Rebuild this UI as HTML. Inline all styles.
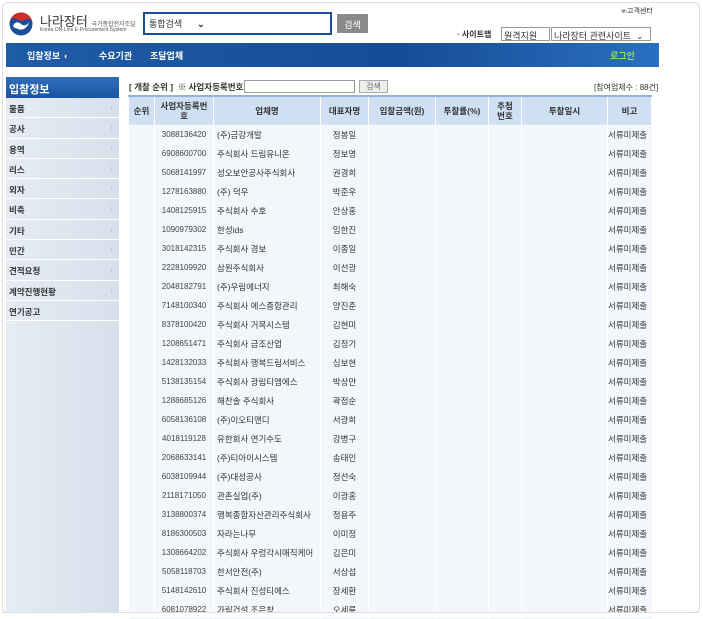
<!DOCTYPE html>
<html><head><meta charset="utf-8">
<style>
*{margin:0;padding:0;box-sizing:border-box}
body{width:703px;height:617px;background:#fff;font-family:"Liberation Sans","Noto Sans CJK KR",sans-serif;font-size:9px;color:#333;position:relative;overflow:hidden}
.frame{position:absolute;left:2px;top:2px;width:698px;height:611px;border:1px solid #ddd;border-radius:6px;background:#fff}
.abs{position:absolute}
.nav{left:6px;top:43px;width:653px;height:24px;background:linear-gradient(90deg,#1f5ca8,#164c95 60%,#2a6fc0);}
.nav span{position:absolute;top:6px;color:#fff;font-size:9px;font-weight:bold}
.side{left:6px;top:77px;width:113px;height:535px;background:linear-gradient(90deg,#e6ecf4,#d6e0ec)}
.sh{height:21px;background:linear-gradient(#2f6fbd,#1b549e);color:#fff;font-weight:bold;font-size:11px;padding:4px 0 0 3px}
.si{height:20.3px;border-bottom:1px solid #fff;font-size:8.5px;font-weight:bold;color:#333;padding:5px 0 0 3px;position:relative}
.si i{position:absolute;right:6px;top:5px;color:#bbb;font-style:normal;font-size:8px}
table{border-collapse:collapse;position:absolute;left:128px;top:95px;width:523px;table-layout:fixed}
th{background:#cfe0f3;height:29px;border:1px solid #fff;border-top:2px solid #8fb3dc;font-size:8.5px;color:#333;font-weight:bold;line-height:10px}
td{height:19px;background:#f3f7fc;border-left:1px solid #fff;font-size:8.5px;white-space:nowrap;overflow:hidden}
td.n{text-align:center;font-size:8px;color:#444}
td.c{padding-left:3px}
td.m{text-align:center}
td.r{text-align:right;padding-right:5px}
</style></head><body>
<div class="frame"></div>
<svg class="abs" style="left:7px;top:11px" width="28" height="26" viewBox="0 0 28 26"><circle cx="14" cy="13" r="11.5" fill="#1d4e9a"/><path d="M2.5 13A11.5 11.5 0 0 1 25.5 13C25.5 9 22 6.5 18.5 8.5C15.5 10.3 12 10 10 8C7 5.5 2.5 8 2.5 13Z" fill="#d52a2a"/><path d="M6 15C8 10 12 11 14 13C16 15 20 15 22 11C21 17 15 20 11 18C9 17 7 17 6 15Z" fill="#fff"/></svg>
<div class="abs" style="left:40px;top:11px;font-size:13px;color:#333">나라장터 <span style="font-size:6px;color:#555">국가종합전자조달</span></div>
<div class="abs" style="left:40px;top:27px;font-size:5px;color:#555">Korea ON-Line E-Procurement System</div>
<div class="abs" style="left:143px;top:12px;width:189px;height:23px;border:2px solid #1b4f94;background:#fff;font-size:9px;padding:3px 4px">통합검색 &nbsp;&nbsp;&nbsp;&nbsp;&nbsp;<b>⌄</b></div>
<div class="abs" style="left:337px;top:14px;width:31px;height:19px;background:#8a8a8a;color:#fff;font-size:9px;text-align:center;padding-top:4px">검색</div>
<div class="abs" style="left:620px;top:6px;font-size:7px;color:#333">☜고객센터</div>
<div class="abs" style="left:457px;top:29px;font-size:8px;font-weight:bold">· 사이트맵</div>
<div class="abs" style="left:501px;top:27px;width:49px;height:14px;border:1px solid #999;font-size:9px;padding:1px 2px">원격지원 ⌄</div>
<div class="abs" style="left:551px;top:27px;width:100px;height:14px;border:1px solid #999;font-size:9px;padding:1px 2px">나라장터 관련사이트 &nbsp;⌄</div>
<div class="abs nav"><span style="left:21px">입찰정보 <span style="position:static;color:#ddd">◖</span></span><span style="left:93px">수요기관</span><span style="left:144px">조달업체</span><span style="left:604px;color:#8fe05a">로그인</span></div>
<div class="abs side">
<div class="sh">입찰정보</div>
<div class="si">물품<i>›</i></div><div class="si">공사<i>›</i></div><div class="si">용역<i>›</i></div><div class="si">리스<i>›</i></div><div class="si">외자<i>›</i></div><div class="si">비축<i>›</i></div><div class="si">기타<i>›</i></div><div class="si">민간<i>›</i></div><div class="si">견적요청<i>›</i></div><div class="si">계약진행현황<i>›</i></div><div class="si">연기공고</div>
</div>
<div class="abs" style="left:129px;top:81px;font-size:8.5px;font-weight:bold">[ 개찰 순위 ] &nbsp;※ 사업자등록번호</div>
<div class="abs" style="left:244px;top:80px;width:111px;height:13px;border:1px solid #999;background:#fff"></div>
<div class="abs" style="left:359px;top:80px;width:29px;height:13px;border:1px solid #aaa;background:#eee;font-size:8px;text-align:center;color:#666">검색</div>
<div class="abs" style="left:594px;top:82px;font-size:8px">[참여업체수 : 88건]</div>
<table>
<colgroup><col style="width:26px"><col style="width:59px"><col style="width:107px"><col style="width:48px"><col style="width:67px"><col style="width:53px"><col style="width:33px"><col style="width:86px"><col style="width:44px"></colgroup>
<tr><th>순위</th><th>사업자등록번<br>호</th><th>업체명</th><th>대표자명</th><th>입찰금액(원)</th><th>투찰률(%)</th><th>추첨<br>번호</th><th>투찰일시</th><th>비고</th></tr>
<tbody>
<tr><td></td><td class="n">3088136420</td><td class="c">(주)금강개발</td><td class="m">정봉일</td><td></td><td></td><td></td><td></td><td class="r">서류미제출</td></tr>
<tr><td></td><td class="n">6908600700</td><td class="c">주식회사 드림유니온</td><td class="m">정보영</td><td></td><td></td><td></td><td></td><td class="r">서류미제출</td></tr>
<tr><td></td><td class="n">5068141997</td><td class="c">성오보안공사주식회사</td><td class="m">권경희</td><td></td><td></td><td></td><td></td><td class="r">서류미제출</td></tr>
<tr><td></td><td class="n">1278163880</td><td class="c">(주) 덕우</td><td class="m">박준우</td><td></td><td></td><td></td><td></td><td class="r">서류미제출</td></tr>
<tr><td></td><td class="n">1408125915</td><td class="c">주식회사 수호</td><td class="m">안상홍</td><td></td><td></td><td></td><td></td><td class="r">서류미제출</td></tr>
<tr><td></td><td class="n">1090979302</td><td class="c">한성ids</td><td class="m">임한진</td><td></td><td></td><td></td><td></td><td class="r">서류미제출</td></tr>
<tr><td></td><td class="n">3018142315</td><td class="c">주식회사 경보</td><td class="m">이종일</td><td></td><td></td><td></td><td></td><td class="r">서류미제출</td></tr>
<tr><td></td><td class="n">2228109920</td><td class="c">삼원주식회사</td><td class="m">이선광</td><td></td><td></td><td></td><td></td><td class="r">서류미제출</td></tr>
<tr><td></td><td class="n">2048182791</td><td class="c">(주)우림에너지</td><td class="m">최해숙</td><td></td><td></td><td></td><td></td><td class="r">서류미제출</td></tr>
<tr><td></td><td class="n">7148100340</td><td class="c">주식회사 에스종합관리</td><td class="m">양진춘</td><td></td><td></td><td></td><td></td><td class="r">서류미제출</td></tr>
<tr><td></td><td class="n">8378100420</td><td class="c">주식회사 거목시스템</td><td class="m">김현미</td><td></td><td></td><td></td><td></td><td class="r">서류미제출</td></tr>
<tr><td></td><td class="n">1208651471</td><td class="c">주식회사 금조산업</td><td class="m">김정기</td><td></td><td></td><td></td><td></td><td class="r">서류미제출</td></tr>
<tr><td></td><td class="n">1428132033</td><td class="c">주식회사 행복드림서비스</td><td class="m">심보현</td><td></td><td></td><td></td><td></td><td class="r">서류미제출</td></tr>
<tr><td></td><td class="n">5138135154</td><td class="c">주식회사 광림티엠에스</td><td class="m">박상만</td><td></td><td></td><td></td><td></td><td class="r">서류미제출</td></tr>
<tr><td></td><td class="n">1288685126</td><td class="c">해찬솔 주식회사</td><td class="m">곽점순</td><td></td><td></td><td></td><td></td><td class="r">서류미제출</td></tr>
<tr><td></td><td class="n">6058136108</td><td class="c">(주)이오티앤디</td><td class="m">서광희</td><td></td><td></td><td></td><td></td><td class="r">서류미제출</td></tr>
<tr><td></td><td class="n">4018119128</td><td class="c">유한회사 연기수도</td><td class="m">강병구</td><td></td><td></td><td></td><td></td><td class="r">서류미제출</td></tr>
<tr><td></td><td class="n">2068633141</td><td class="c">(주)티아이시스템</td><td class="m">송태인</td><td></td><td></td><td></td><td></td><td class="r">서류미제출</td></tr>
<tr><td></td><td class="n">6038109944</td><td class="c">(주)대성공사</td><td class="m">정선숙</td><td></td><td></td><td></td><td></td><td class="r">서류미제출</td></tr>
<tr><td></td><td class="n">2118171050</td><td class="c">관촌실업(주)</td><td class="m">이광홍</td><td></td><td></td><td></td><td></td><td class="r">서류미제출</td></tr>
<tr><td></td><td class="n">3138800374</td><td class="c">행복종합자산관리주식회사</td><td class="m">정용주</td><td></td><td></td><td></td><td></td><td class="r">서류미제출</td></tr>
<tr><td></td><td class="n">8186300503</td><td class="c">자라는나무</td><td class="m">이미정</td><td></td><td></td><td></td><td></td><td class="r">서류미제출</td></tr>
<tr><td></td><td class="n">1308664202</td><td class="c">주식회사 우렁각시매직케어</td><td class="m">김은미</td><td></td><td></td><td></td><td></td><td class="r">서류미제출</td></tr>
<tr><td></td><td class="n">5058118703</td><td class="c">한서안전(주)</td><td class="m">서상섭</td><td></td><td></td><td></td><td></td><td class="r">서류미제출</td></tr>
<tr><td></td><td class="n">5148142610</td><td class="c">주식회사 진성티에스</td><td class="m">장세환</td><td></td><td></td><td></td><td></td><td class="r">서류미제출</td></tr>
<tr><td></td><td class="n">6081078922</td><td class="c">가림건설 조은창</td><td class="m">오세룡</td><td></td><td></td><td></td><td></td><td class="r">서류미제출</td></tr>
</tbody></table>
<div class="abs" style="left:0;top:613px;width:703px;height:4px;background:#fff"></div>
<div class="abs" style="left:2px;top:612px;width:698px;height:1px;background:#ddd"></div>
</body></html>
